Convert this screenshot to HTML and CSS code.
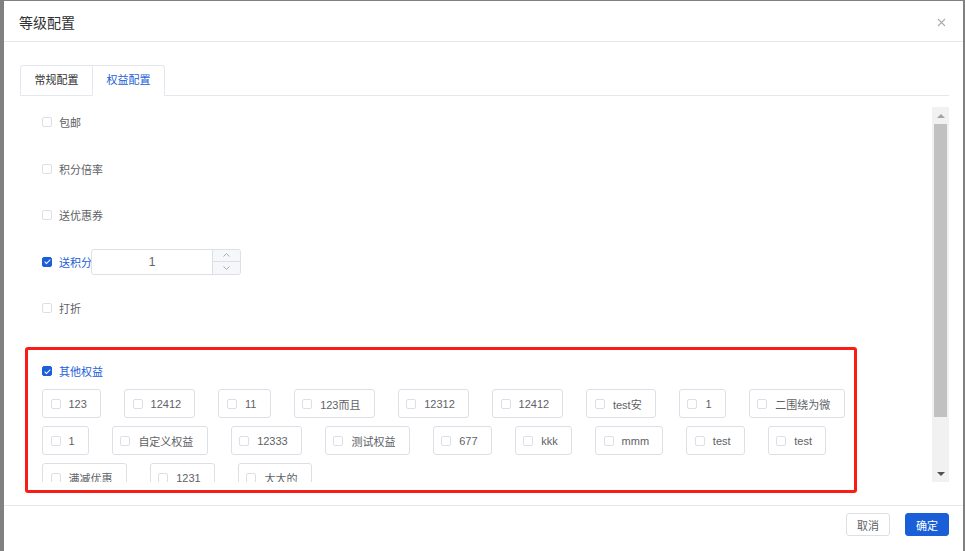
FILE: index.html
```html
<!DOCTYPE html>
<html lang="zh-CN">
<head>
  <meta charset="UTF-8" />
  <meta name="viewport" content="width=device-width, initial-scale=1.0"/>
  <title>等级配置</title>
  <link rel="stylesheet" href="styles.css">
</head>
<body>

  <div class="dialog">
    <div class="dialog-header">
      <span class="dialog-title">等级配置</span>
      <svg class="dialog-close" width="9" height="9" viewBox="0 0 9 9">
        <path d="M1 1L8 8M8 1L1 8" stroke="#a8abb2" stroke-width="1.1" fill="none"/>
      </svg>
    </div>

    <div class="dialog-body">
      <div class="tabs-nav">
        <div class="tabs-list">
          <div class="tab">常规配置</div>
          <div class="tab active">权益配置</div>
        </div>
      </div>

      <div class="pane">
        <div class="pane-content">
          <div class="row">
            <label class="check"><span class="box"></span>包邮</label>
          </div>
          <div class="row">
            <label class="check"><span class="box"></span>积分倍率</label>
          </div>
          <div class="row">
            <label class="check"><span class="box"></span>送优惠券</label>
          </div>
          <div class="row">
            <label class="check checked"><span class="box"></span>送积分</label>
            <div class="num">
              <div class="num-value">1</div>
              <div class="num-ctrl">
                <span class="num-btn">
                  <svg width="7" height="4" viewBox="0 0 7 4"><path d="M0.5 3.5L3.5 0.6L6.5 3.5" stroke="#a8abb2" fill="none"/></svg>
                </span>
                <span class="num-btn">
                  <svg width="7" height="4" viewBox="0 0 7 4"><path d="M0.5 0.5L3.5 3.4L6.5 0.5" stroke="#a8abb2" fill="none"/></svg>
                </span>
              </div>
            </div>
          </div>
          <div class="row">
            <label class="check"><span class="box"></span>打折</label>
          </div>

          <div class="row other">
            <label class="check checked"><span class="box"></span>其他权益</label>
          </div>
          <div class="group" id="benefitGroup"></div>
        </div>

        <div class="scrollbar">
          <span class="sb-btn"><span class="arrow-up"></span></span>
          <span class="sb-thumb"></span>
          <span class="sb-space"></span>
          <span class="sb-btn"><span class="arrow-down"></span></span>
        </div>
      </div>
    </div>

    <div class="dialog-footer">
      <button class="btn">取消</button>
      <button class="btn primary">确定</button>
    </div>
  </div>

  <div class="mark"></div>

  <script>
    const benefits = [
      "123", "12412", "11", "123而且", "12312", "12412", "test安", "1", "二围绕为微",
      "1", "自定义权益", "12333", "测试权益", "677", "kkk", "mmm", "test", "test",
      "满减优惠", "1231", "大大的"
    ];

    const group = document.getElementById("benefitGroup");
    benefits.forEach(name => {
      const item = document.createElement("label");
      item.className = "bitem";
      item.innerHTML = `<span class="box"></span>${name}`;
      group.appendChild(item);
    });
  </script>

</body>
</html>
```

FILE: styles.css
```css
body {
  margin: 0;
  background: #808080;
  font-family: "Liberation Sans", "Noto Sans CJK SC", sans-serif;
  font-size: 11px;
  color: #606266;
  overflow: hidden;
  height: 551px;
}

.dialog {
  margin: 1px 2px 0 4px;
  background: #fff;
  height: 560px;
}

.dialog-header {
  height: 41px;
  padding: 2px 17px 0 15px;
  box-sizing: border-box;
  display: flex;
  align-items: center;
  justify-content: space-between;
  border-bottom: 1px solid #e8e8ec;
}

.dialog-title {
  font-size: 14px;
  color: #303133;
}

.dialog-body {
  padding: 23px 14px 0 16px;
}

/* card tabs */
.tabs-nav {
  display: flex;
  border-bottom: 1px solid #e4e7ed;
}

.tabs-list {
  display: flex;
  border: 1px solid #e4e7ed;
  border-bottom: none;
  border-radius: 3px 3px 0 0;
  margin-bottom: -1px;
}

.tab {
  height: 29px;
  line-height: 29px;
  padding: 0 13.5px;
  border-bottom: 1px solid #e4e7ed;
  color: #303133;
}

.tab + .tab {
  border-left: 1px solid #e4e7ed;
}

.tab.active {
  color: #1a5fd7;
  border-bottom-color: #fff;
}

/* scrolling pane */
.pane {
  margin-top: 11px;
  height: 375px;
  display: flex;
}

.pane-content {
  flex: 1;
  overflow: hidden;
  padding: 1px 0 0 22px;
  display: flex;
  flex-direction: column;
}

.row {
  height: 28px;
  flex: none;
  display: flex;
  align-items: center;
  margin-bottom: 18.5px;
}

.row.other {
  margin-top: 16.5px;
  margin-bottom: 4px;
}

.check {
  display: inline-flex;
  align-items: center;
}

.box {
  width: 10px;
  height: 10px;
  box-sizing: border-box;
  border: 1px solid #dcdfe6;
  border-radius: 2px;
  margin-right: 7px;
  position: relative;
  flex: none;
}

.check.checked {
  color: #1a5fd7;
}

.check.checked .box {
  background: #1a5fd7;
  border-color: #1a5fd7;
}

.check.checked .box::after {
  content: "";
  position: absolute;
  left: 2.5px;
  top: 0.5px;
  width: 2px;
  height: 5px;
  border: 1px solid #fff;
  border-top: none;
  border-left: none;
  transform: rotate(45deg);
}

/* number input */
.num {
  display: flex;
  width: 150px;
  height: 26px;
  margin-left: -1px;
  box-sizing: border-box;
  border: 1px solid #dcdfe6;
  border-radius: 3px;
}

.num-value {
  flex: 1;
  text-align: center;
  line-height: 24px;
  font-size: 12px;
  color: #606266;
}

.num-ctrl {
  width: 27px;
  display: flex;
  flex-direction: column;
  border-left: 1px solid #dcdfe6;
  background: #f5f7fa;
  border-radius: 0 3px 3px 0;
}

.num-btn {
  flex: 1;
  display: flex;
  align-items: center;
  justify-content: center;
}

.num-btn + .num-btn {
  border-top: 1px solid #dcdfe6;
}

/* bordered checkbox group */
.group {
  width: 850px;
  display: flex;
  flex-wrap: wrap;
  column-gap: 23px;
  row-gap: 8px;
  flex: none;
}

.bitem {
  display: inline-flex;
  align-items: center;
  height: 29px;
  box-sizing: border-box;
  border: 1px solid #dcdfe6;
  border-radius: 3px;
  padding: 0 13.25px 0 7.5px;
}

.bitem .box {
  margin-right: 8px;
}

/* scrollbar */
.scrollbar {
  width: 17px;
  background: #f1f1f1;
  display: flex;
  flex-direction: column;
  align-items: center;
}

.sb-btn {
  height: 17px;
  width: 17px;
  flex: none;
  display: flex;
  align-items: center;
  justify-content: center;
}

.arrow-up {
  border-left: 4px solid transparent;
  border-right: 4px solid transparent;
  border-bottom: 4px solid #a3a3a3;
}

.arrow-down {
  border-left: 4px solid transparent;
  border-right: 4px solid transparent;
  border-top: 4px solid #505050;
}

.sb-thumb {
  width: 13px;
  height: 293px;
  background: #c1c1c1;
  flex: none;
}

.sb-space {
  flex: 1;
}

/* footer */
.dialog-footer {
  margin-top: 23px;
  border-top: 1px solid #e8e8ec;
  padding: 7px 14px 0 0;
  display: flex;
  justify-content: flex-end;
  gap: 15px;
}

.btn {
  width: 44px;
  height: 23px;
  padding: 0;
  font-family: inherit;
  font-size: 11px;
  border: 1px solid #dcdfe6;
  border-radius: 3px;
  background: #fff;
  color: #606266;
}

.btn.primary {
  background: #1a5fd7;
  border-color: #1a5fd7;
  color: #fff;
}

/* highlight frame drawn over the other-benefits block */
.mark {
  position: absolute;
  left: 25px;
  top: 347px;
  width: 832px;
  height: 146px;
  box-sizing: border-box;
  border: 3px solid #f81d16;
  border-radius: 3px;
}
```
